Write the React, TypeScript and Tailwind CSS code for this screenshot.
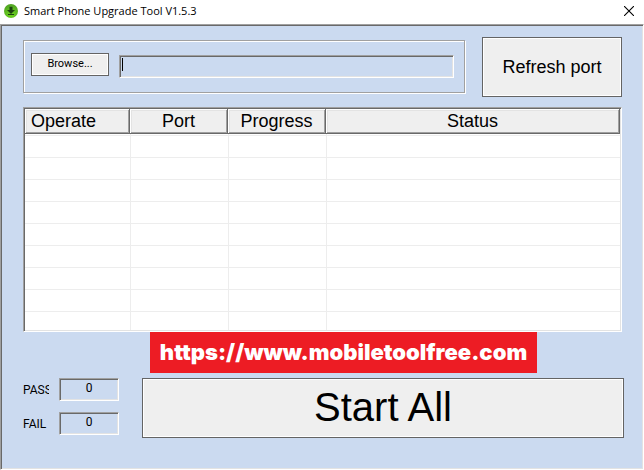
import React, { useState } from "react";

const COLUMNS = [
  { name: "Operate", header: "w-[105px] text-left pl-1.5", cell: "" },
  { name: "Port", header: "w-[98px]", cell: "border-l" },
  { name: "Progress", header: "w-[98px]", cell: "border-l" },
  { name: "Status", header: "", cell: "border-l" },
];

// first row is the thin strip under the header, last one is cut by the frame
const ROW_HEIGHTS = [
  "h-[2px]",
  "h-[22px]",
  "h-[22px]",
  "h-[22px]",
  "h-[22px]",
  "h-[22px]",
  "h-[22px]",
  "h-[22px]",
  "h-[22px]",
  "h-[18px]",
];

const sunken =
  "border border-t-[#a0a0a0] border-l-[#a0a0a0] border-r-white border-b-white shadow-[inset_1px_1px_0_#696969,inset_-1px_-1px_0_#e3e3e3]";
const raised =
  "border border-[#646464] bg-[#efefef] shadow-[inset_0_0_0_1px_#ffffff] text-black";

const TitleBar: React.FC = () => (
  <header className="flex h-6 items-center bg-white pr-2.5 pb-0.5 pl-1">
    <svg viewBox="0 0 14 14" className="size-3.5" aria-hidden="true">
      <defs>
        <radialGradient id="orb" cx="50%" cy="75%" r="70%">
          <stop offset="0" stopColor="#6ed81c" />
          <stop offset="1" stopColor="#52a524" />
        </radialGradient>
      </defs>
      <circle cx="7" cy="7" r="7" fill="url(#orb)" />
      <path d="M5.5 2.8h3v3.2h2.5L7 10 3 6h2.5z" fill="#1d4210" />
      <path d="M4 10.5h6" fill="none" stroke="#1d4210" strokeWidth="1" />
    </svg>
    <h1 className="ml-1.5 flex-1 font-['Open_Sans','Noto_Sans',sans-serif] text-[11px] leading-4 text-black">
      Smart Phone Upgrade Tool V1.5.3
    </h1>
    <button aria-label="Close">
      <svg viewBox="0 0 10 10" className="size-2.5" aria-hidden="true">
        <path d="M0 0l10 10M10 0L0 10" stroke="#000" strokeWidth="1.1" />
      </svg>
    </button>
  </header>
);

const FirmwarePicker: React.FC = () => {
  const [path, setPath] = useState("");

  return (
    <div className="flex h-[53px] flex-1 gap-2.5 border border-[#a0a0a0] pt-3 pr-2.5 pb-3.5 pl-[7px] shadow-[1px_1px_0_#ffffff,inset_1px_1px_0_#ffffff]">
      <button
        className={`h-[23px] w-[78px] self-start font-['Roboto',sans-serif] text-[11px] ${raised}`}
      >
        Browse...
      </button>
      <div className="relative flex-1 self-end">
        <input
          aria-label="Firmware file"
          value={path}
          onChange={(e) => setPath(e.target.value)}
          className={`block h-[23px] w-full px-1 text-[12px] outline-none ${sunken}`}
        />
        {path === "" && (
          <span className="pointer-events-none absolute top-[3px] left-[3px] h-[13px] w-px bg-black" />
        )}
      </div>
    </div>
  );
};

const PortTable: React.FC = () => (
  <div className={`bg-white p-px ${sunken}`}>
    <table className="w-full table-fixed border-separate border-spacing-0">
      <thead>
        <tr>
          {COLUMNS.map((col) => (
            <th
              key={col.name}
              className={`h-[25px] border-r border-b border-[#696969] bg-[#efefef] p-0 text-center text-[18px] leading-5 font-normal shadow-[inset_1px_1px_0_#ffffff,inset_-1px_-1px_0_#a0a0a0,inset_2px_2px_0_#e3e3e3] ${col.header}`}
            >
              {col.name}
            </th>
          ))}
        </tr>
      </thead>
      <tbody>
        {ROW_HEIGHTS.map((height, i) => (
          <tr key={i}>
            {COLUMNS.map((col) => (
              <td
                key={col.name}
                className={`border-[#ededed] p-0 ${height} ${col.cell} ${
                  i < ROW_HEIGHTS.length - 1 ? "border-b" : ""
                }`}
              />
            ))}
          </tr>
        ))}
      </tbody>
    </table>
  </div>
);

const Counter: React.FC<{ id: string; label: string; value: number }> = ({ id, label, value }) => (
  <div className="flex items-center gap-2.5 font-['Roboto',sans-serif] text-[12px]">
    <label htmlFor={id} className="w-[26px] overflow-hidden">
      {label}
    </label>
    <input
      id={id}
      readOnly
      value={value}
      className={`h-[23px] w-[60px] pb-1 text-center outline-none ${sunken}`}
    />
  </div>
);

const App: React.FC = () => {
  return (
    <div className="flex min-h-screen flex-col bg-white font-['Liberation_Sans',Arial,sans-serif] text-black">
      <TitleBar />
      <main className={`flex-1 bg-[#cbdaf0] pt-3 pr-[19px] pb-7 pl-[22px] ${sunken}`}>
        <div className="mr-0.5">
          <div className="flex items-center gap-[17px]">
            <div className="flex flex-1 pb-px">
              <FirmwarePicker />
            </div>
            <button className={`h-[60px] w-[140px] text-[18px] ${raised}`}>Refresh port</button>
          </div>
          <div className="mt-2.5">
            <PortTable />
          </div>
        </div>

        <a
          href="https://www.mobiletoolfree.com"
          className="ml-[127px] flex h-[41px] w-[387px] items-center justify-center bg-[#ed1c24] font-['Inter',sans-serif] text-[22px] font-black text-white"
        >
          https://www.mobiletoolfree.com
        </a>

        <div className="mt-[5px] flex gap-[23px]">
          <div className="flex flex-col gap-[11px]">
            <Counter id="pass" label="PASS" value={0} />
            <Counter id="fail" label="FAIL" value={0} />
          </div>
          <button className={`h-[60px] flex-1 pb-0.5 text-[40px] leading-none ${raised}`}>
            Start All
          </button>
        </div>
      </main>
    </div>
  );
};

export default App;
